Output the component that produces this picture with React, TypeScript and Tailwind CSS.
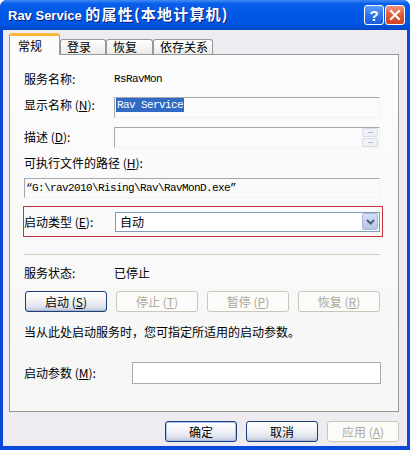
import React from 'react';

// Windows XP style "service properties" dialog

const cjk = '[font-family:"Noto_Sans_CJK_SC","Noto_Sans",sans-serif]';

const Acc = ({ k }: { k: string }) => <span className="underline">{k}</span>;

const Label = ({ text, k, className = '' }: { text: string; k?: string; className?: string }) => (
  <span className={`block text-[12px] leading-[14px] text-black whitespace-nowrap ${className}`}>
    {text}
    {k && (
      <>
        {' '}(<Acc k={k} />):
      </>
    )}
  </span>
);

const Mono = ({ children, className = '' }: { children: React.ReactNode; className?: string }) => (
  <span
    className={`[font-family:"Liberation_Mono",monospace] text-[11px] tracking-[-0.6px] leading-[14px] whitespace-nowrap ${className}`}
  >
    {children}
  </span>
);

interface BtnProps {
  label: string;
  k?: string;
  disabled?: boolean;
  isDefault?: boolean;
  className?: string;
}

const XpButton = ({ label, k, disabled, isDefault, className = '' }: BtnProps) => {
  if (disabled) {
    return (
      <div
        className={`h-[21px] flex items-center justify-center rounded-[3px] border border-[#C9C7BA] bg-[#FBFBFA] text-[12px] text-[#ACA899] ${className}`}
      >
        {label}
        {k && (
          <>
            {' '}(<Acc k={k} />)
          </>
        )}
      </div>
    );
  }
  return (
    <div
      className={`h-[21px] flex items-center justify-center rounded-[3px] border border-[#1C3E78] bg-[linear-gradient(to_bottom,#FFFFFF_0%,#F3F4F8_45%,#DCE1EC_80%,#B9C3D9_100%)] text-[12px] text-black ${
        isDefault ? 'shadow-[inset_0_0_0_1px_#A9C3EE]' : 'shadow-[inset_0_-1px_0_#AEB9D2]'
      } ${className}`}
    >
      {label}
      {k && (
        <>
          {' '}(<Acc k={k} />)
        </>
      )}
    </div>
  );
};

const Tab = ({ label, active, w }: { label: string; active?: boolean; w: string }) =>
  active ? (
    <div
      className={`${w} h-[22px] -mb-px relative z-10 rounded-t-[3px] border-x border-[#919B9C] border-t-[3px] border-t-[#F7B93B] bg-[#FCFCFE] pl-[8px] pt-[3px] text-[12px] leading-[14px]`}
    >
      {label}
    </div>
  ) : (
    <div
      className={`${w} h-[15px] rounded-t-[3px] border-x border-t border-[#919B9C] bg-[linear-gradient(to_bottom,#FFFFFF,#ECEBE6)] pl-[6px] text-[12px] leading-[14px]`}
    >
      {label}
    </div>
  );

const Sunken = ({ children, className = '' }: { children?: React.ReactNode; className?: string }) => (
  <div
    className={`border-t border-l border-[#A7A6AA] border-r border-b border-r-[#F2F2F2] border-b-[#F2F2F2] ${className}`}
  >
    {children}
  </div>
);

export default function App() {
  return (
    <div
      className={`w-[410px] h-[450px] flex flex-col overflow-hidden rounded-t-[7px] bg-[#0A48D8] text-[12px] leading-[14px] ${cjk}`}
    >
      {/* Title bar */}
      <div className="h-[30px] shrink-0 flex items-center pl-[8px] pr-[5px] bg-[linear-gradient(to_bottom,#3F8CF3_0%,#0A5FEA_12%,#0058E6_45%,#0056E2_80%,#0046C4_100%)]">
        <div className="flex items-baseline text-white font-bold leading-[18px] [text-shadow:1px_1px_0_#0A1E80]">
          <span className='[font-family:"Liberation_Sans",sans-serif] text-[13px]'>Rav Service&nbsp;</span>
          <span className="text-[15px] tracking-[1.2px]">的属性(本地计算机)</span>
        </div>
        <div className="ml-auto flex gap-[1px] self-start mt-[5px]">
          <div className="w-[20px] h-[20px] rounded-[3px] border border-white bg-[linear-gradient(to_bottom,#5C9CF8,#2A6EEA_60%,#1C5BD6)] flex items-center justify-center">
            <span className='[font-family:"Liberation_Sans",sans-serif] text-white font-bold text-[15px] leading-none'>?</span>
          </div>
          <div className="w-[20px] h-[20px] rounded-[3px] border border-white bg-[linear-gradient(to_bottom,#F0957A,#E0532F_55%,#CC4422)] flex items-center justify-center">
            <svg width="12" height="12" viewBox="0 0 12 12">
              <path d="M2 2 L10 10 M10 2 L2 10" stroke="white" strokeWidth="2.2" strokeLinecap="square" />
            </svg>
          </div>
        </div>
      </div>

      {/* Body */}
      <div className="flex-1 mx-[3px] mb-[4px] bg-[#EEECF0] flex flex-col pt-[3px]">
        {/* Tabs */}
        <div className="flex items-end h-[21px] ml-[6px]">
          <Tab label="常规" active w="w-[51px]" />
          <Tab label="登录" w="w-[46px]" />
          <Tab label="恢复" w="w-[47px]" />
          <Tab label="依存关系" w="w-[60px]" />
        </div>

        {/* Panel */}
        <div className="ml-[6px] mr-[8px] h-[358px] border border-[#919B9C] bg-[linear-gradient(to_bottom,#FCFCFE,#F6F6F5)] pl-[14px] pr-[18px] flex flex-col">
          {/* 服务名称 */}
          <div className="flex items-center h-[21px] mt-[13px]">
            <Label text="服务名称:" className="w-[90px]" />
            <Mono>RsRavMon</Mono>
          </div>

          {/* 显示名称 */}
          <div className="flex items-start mt-[8px]">
            <Label text="显示名称" k="N" className="w-[90px] mt-[1px]" />
            <Sunken className="flex-1 h-[21px] pl-[1px] flex items-start">
              <Mono className="bg-[#316AC5] text-white px-[1px] block">Rav Service</Mono>
            </Sunken>
          </div>

          {/* 描述 */}
          <div className="flex items-start mt-[9px]">
            <Label text="描述" k="D" className="w-[90px] mt-[3px]" />
            <Sunken className="flex-1 h-[21px] flex justify-end pr-[1px]">
              <div className="flex flex-col gap-[1px]">
                <div className="w-[16px] h-[9px] rounded-[2px] border border-[#D8DDE6] bg-[#EEF1F6] flex items-center justify-center">
                  <div className="w-[5px] h-px bg-[#B8BECA]" />
                </div>
                <div className="w-[16px] h-[9px] rounded-[2px] border border-[#D8DDE6] bg-[#EEF1F6] flex items-center justify-center">
                  <div className="w-[5px] h-px bg-[#B8BECA]" />
                </div>
              </div>
            </Sunken>
          </div>

          {/* 路径 */}
          <Label text="可执行文件的路径" k="H" className="mt-[8px]" />
          <Sunken className="mt-[8px] h-[20px] flex items-center pl-[1px]">
            <Mono>“G:\rav2010\Rising\Rav\RavMonD.exe”</Mono>
          </Sunken>

          {/* 启动类型 (highlighted) */}
          <div className="mt-[8px] -ml-[1px] -mr-[3px] h-[31px] border border-[#C5343F] flex items-center">
            <Label text="启动类型" k="E" className="w-[91px]" />
            <div className="flex-1 mr-[2px] h-[20px] border border-[#7F9DB9] bg-white flex items-center pl-[4px] pr-[1px]">
              <span className="text-[12px] leading-[14px]">自动</span>
              <div className="ml-auto w-[16px] h-[17px] rounded-[2px] border border-[#A9B8D6] bg-[linear-gradient(to_bottom,#D6E0F5,#B6C6E8)] flex items-center justify-center">
                <svg width="9" height="6" viewBox="0 0 9 6">
                  <path d="M1 1 L4.5 4.5 L8 1" stroke="#4D6185" strokeWidth="2" fill="none" />
                </svg>
              </div>
            </div>
          </div>

          {/* Separator */}
          <div className="mt-[17px] h-px bg-[#D0D0BF]" />

          {/* 服务状态 */}
          <div className="flex items-center mt-[11px]">
            <Label text="服务状态:" className="w-[90px]" />
            <span className="text-[12px] leading-[14px]">已停止</span>
          </div>

          {/* Control buttons */}
          <div className="flex justify-between mt-[11px] pl-[1px]">
            <XpButton label="启动" k="S" className="w-[82px]" />
            <XpButton label="停止" k="T" disabled className="w-[82px]" />
            <XpButton label="暂停" k="P" disabled className="w-[82px]" />
            <XpButton label="恢复" k="R" disabled className="w-[82px]" />
          </div>

          <Label text="当从此处启动服务时，您可指定所适用的启动参数。" className="mt-[13px]" />

          {/* 启动参数 */}
          <div className="flex items-center mt-[23px]">
            <Label text="启动参数" k="M" className="w-[108px]" />
            <div className="flex-1 -mr-[1px] h-[22px] border border-[#A5ACB2] bg-white" />
          </div>
        </div>

        {/* Dialog buttons */}
        <div className="flex justify-end gap-[9px] mt-[9px] mr-[8px]">
          <XpButton label="确定" isDefault className="w-[72px]" />
          <XpButton label="取消" className="w-[72px]" />
          <XpButton label="应用" k="A" disabled className="w-[72px]" />
        </div>
      </div>
    </div>
  );
}
